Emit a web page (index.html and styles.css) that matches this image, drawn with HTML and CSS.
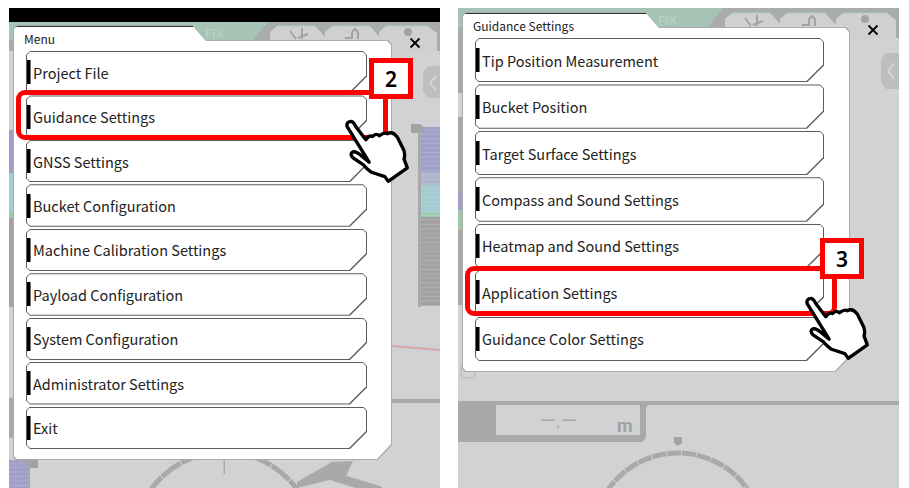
FILE: index.html
```html
<!DOCTYPE html>
<html lang="en">
<head>
    <meta charset="UTF-8">
    <meta name="viewport" content="width=device-width, initial-scale=1.0">
    <title>Menu steps</title>
    <link rel="stylesheet" href="styles.css">
</head>
<body>
    <svg class="defs" width="0" height="0">
        <defs>
            <symbol id="hand" viewBox="40 200 200 200">
                <path d="M52 228 Q50 213 65 213 Q72 215 78 228 L108 268 Q118 253 128 258 Q140 247 148 256 Q165 245 172 250 Q188 240 202 260 L222 300 Q226 318 222 325 L232 352 L175 392 L165 378 L125 365 Q110 355 100 342 L70 322 Q58 310 70 304 Q80 302 100 320 L118 335 Z" fill="#fff" stroke="#000" stroke-width="10" stroke-linejoin="round"/>
            </symbol>
            <pattern id="stripes" width="4.5" height="4.5" patternUnits="userSpaceOnUse">
                <rect y="3.5" width="4.5" height="1" fill="#fff" opacity=".15"/>
            </pattern>
        </defs>
    </svg>

    <div class="screen screen-left">
        <svg class="backdrop" viewBox="9 8 431 480">
            <rect x="9" y="8" width="431" height="480" fill="#d1d2d4"/>
            <rect x="9" y="22" width="431" height="29" fill="#a9abad"/>
            <rect x="9" y="8" width="431" height="14" fill="#000"/>
            <polygon points="9,22 268,22 253,40 9,40" fill="#a6c4b6"/>
            <text x="205" y="38" class="fix-text">FIX</text>
            <polygon points="270,32 277,26 315,26 330,42 330,51 270,51" fill="#cfd0d2"/>
            <polygon points="325,32 332,26 370,26 384,42 384,51 325,51" fill="#cfd0d2"/>
            <polygon points="379,32 386,26 428,26 437,33 437,51 379,51" fill="#cfd0d2"/>
            <path d="M278 26H315M332 26H370M386 26H428" stroke="#a6d0c8"/>
            <path d="M290 31l6 8M302 28v11M298 38l10-4M345 38h7v-6M352 32l3-3 3 3M358 32v7" stroke="#a3a3a3" stroke-width="2" fill="none"/>
            <circle cx="408" cy="32" r="4" fill="#a3a3a3"/>
            <polygon points="428,66 440,66 440,98 428,98 423,92 423,72" fill="#bdbec0"/>
            <path d="M436 76l-6 7 6 7" stroke="#d8d9da" stroke-width="1.5" fill="none"/>

            <rect x="418" y="133" width="3" height="174" fill="#a9a9a9"/>
            <rect x="421" y="127" width="19" height="45" fill="#a09fc8"/>
            <rect x="421" y="172" width="19" height="13" fill="#aeb4cc"/>
            <rect x="421" y="185" width="19" height="28" fill="#a4cad2"/>
            <rect x="421" y="213" width="19" height="4" fill="#9cc9a6"/>
            <rect x="421" y="217" width="19" height="89" fill="#a2a2a2"/>
            <rect x="421" y="127" width="19" height="179" fill="url(#stripes)"/>
            <polygon points="411,124 420,124 425,128 420,133 411,133" fill="#a3a3a3"/>
            <path d="M392 346L440 350" stroke="#d4a6a8" stroke-width="2"/>
            <rect x="392" y="399" width="48" height="4" fill="#a9a9a9"/>

            <rect x="9" y="130" width="4" height="43" fill="#a09fc8"/>
            <rect x="9" y="173" width="4" height="40" fill="#a4cad2"/>
            <rect x="9" y="213" width="4" height="5" fill="#9cc9a6"/>
            <rect x="9" y="218" width="4" height="89" fill="#a2a2a2"/>
            <rect x="9" y="398" width="4" height="40" fill="#a9a9a9"/>
            <rect x="9" y="460" width="19" height="28" fill="#a09fc8"/>
            <rect x="9" y="460" width="19" height="28" fill="url(#stripes)"/>
            <rect x="28" y="460" width="2" height="28" fill="#a9a9a9"/>
            <polygon points="24,460 38,460 38,468 30,468" fill="#a3a3a3"/>

            <circle cx="224" cy="542" r="90" fill="none" stroke="#a9a9a9" stroke-width="5" pathLength="360" stroke-dasharray="14.5 .6"/>
            <rect x="223.5" y="460" width="1.5" height="14" fill="#a9a9a9"/>
            <polygon points="297,482 332,462 353,461 346,476 297,488" fill="#a9a9a9"/>
            <path d="M335 477L378 490" stroke="#a9a9a9" stroke-width="9" stroke-linecap="round"/>
        </svg>

        <div class="dialog dialog-left">
            <div class="dialog-inner">
                <div class="dialog-title">Menu</div>
                <div class="menu-list">
                    <div class="menu-btn"><div class="menu-btn-inner"><span class="menu-bar"></span>Project File</div></div>
                    <div class="menu-btn"><div class="menu-btn-inner"><span class="menu-bar"></span>Guidance Settings</div></div>
                    <div class="menu-btn"><div class="menu-btn-inner"><span class="menu-bar"></span>GNSS Settings</div></div>
                    <div class="menu-btn"><div class="menu-btn-inner"><span class="menu-bar"></span>Bucket Configuration</div></div>
                    <div class="menu-btn"><div class="menu-btn-inner"><span class="menu-bar"></span>Machine Calibration Settings</div></div>
                    <div class="menu-btn"><div class="menu-btn-inner"><span class="menu-bar"></span>Payload Configuration</div></div>
                    <div class="menu-btn"><div class="menu-btn-inner"><span class="menu-bar"></span>System Configuration</div></div>
                    <div class="menu-btn"><div class="menu-btn-inner"><span class="menu-bar"></span>Administrator Settings</div></div>
                    <div class="menu-btn"><div class="menu-btn-inner"><span class="menu-bar"></span>Exit</div></div>
                </div>
            </div>
        </div>
        <svg class="close close-left" viewBox="0 0 12 12"><path d="M1.5 1.5L10.5 10.5M10.5 1.5L1.5 10.5" stroke="#000" stroke-width="1.8"/></svg>
        <div class="highlight highlight-left"></div>
        <div class="callout callout-left">2</div>
        <svg class="hand hand-left"><use href="#hand"/></svg>
    </div>

    <div class="screen screen-right">
        <svg class="backdrop" viewBox="458 8 441 480">
            <rect x="458" y="8" width="441" height="480" fill="#d1d2d4"/>
            <rect x="458" y="8" width="441" height="30" fill="#a9abad"/>
            <polygon points="458,8 723,8 708,27 458,27" fill="#a6c4b6"/>
            <text x="658" y="25" class="fix-text">FIX</text>
            <polygon points="725,19 732,13 770,13 785,29 785,38 725,38" fill="#cfd0d2"/>
            <polygon points="780,19 787,13 825,13 840,29 840,38 780,38" fill="#cfd0d2"/>
            <polygon points="836,19 843,13 887,13 896,20 896,38 836,38" fill="#cfd0d2"/>
            <path d="M732 13H770M787 13H825M843 13H887" stroke="#a6d0c8"/>
            <path d="M745 18l6 8M757 15v11M753 25l10-4M802 25h7v-6M809 19l3-3 3 3M815 19v7" stroke="#a3a3a3" stroke-width="2" fill="none"/>
            <circle cx="865" cy="19" r="4" fill="#a3a3a3"/>
            <polygon points="886,53 899,53 899,89 886,89 881,83 881,59" fill="#bdbec0"/>
            <path d="M894 63l-6 8 6 8" stroke="#d8d9da" stroke-width="1.5" fill="none"/>

            <rect x="458" y="38" width="4" height="55" fill="#a9a9a9"/>
            <rect x="458" y="117" width="4" height="76" fill="#a9a9a9"/>
            <rect x="458" y="193" width="4" height="17" fill="#a09fc8"/>
            <rect x="458" y="210" width="4" height="20" fill="#9cc9a6"/>
            <rect x="458" y="230" width="4" height="75" fill="#a9a9a9"/>
            <rect x="461" y="365" width="14" height="13" rx="3" fill="#d1d2d4" stroke="#b5b5b5"/>

            <rect x="458" y="401" width="441" height="4" fill="#a9a9a9"/>
            <polygon points="458,405 648,405 646,408 646,438 642,442 458,442" fill="#a9a9a9"/>
            <rect x="496" y="405" width="144" height="30" fill="#d1d2d4"/>
            <text x="540" y="428" class="readout">—.—</text>
            <text x="617" y="432" class="readout-unit">m</text>

            <polygon points="674,437 682,437 682,443 678,446 674,443" fill="#a3a3a3"/>
            <circle cx="678" cy="538" r="85" fill="none" stroke="#a9a9a9" stroke-width="5" pathLength="360" stroke-dasharray="9.5 .6"/>
        </svg>

        <div class="dialog dialog-right">
            <div class="dialog-inner">
                <div class="dialog-title">Guidance Settings</div>
                <div class="menu-list">
                    <div class="menu-btn"><div class="menu-btn-inner"><span class="menu-bar"></span>Tip Position Measurement</div></div>
                    <div class="menu-btn"><div class="menu-btn-inner"><span class="menu-bar"></span>Bucket Position</div></div>
                    <div class="menu-btn"><div class="menu-btn-inner"><span class="menu-bar"></span>Target Surface Settings</div></div>
                    <div class="menu-btn"><div class="menu-btn-inner"><span class="menu-bar"></span>Compass and Sound Settings</div></div>
                    <div class="menu-btn"><div class="menu-btn-inner"><span class="menu-bar"></span>Heatmap and Sound Settings</div></div>
                    <div class="menu-btn"><div class="menu-btn-inner"><span class="menu-bar"></span>Application Settings</div></div>
                    <div class="menu-btn"><div class="menu-btn-inner"><span class="menu-bar"></span>Guidance Color Settings</div></div>
                </div>
            </div>
        </div>
        <svg class="close close-right" viewBox="0 0 12 12"><path d="M1.5 1.5L10.5 10.5M10.5 1.5L1.5 10.5" stroke="#000" stroke-width="1.8"/></svg>
        <div class="highlight highlight-right"></div>
        <div class="callout callout-right">3</div>
        <svg class="hand hand-right"><use href="#hand"/></svg>
    </div>
</body>
</html>
```

FILE: styles.css
```css
body {
    margin: 0;
    width: 909px;
    height: 488px;
    overflow: hidden;
    display: flex;
    gap: 18px;
    padding: 8px 0 0 9px;
    box-sizing: border-box;
    background: #fff;
    font-family: "Noto Sans CJK JP", "Noto Sans", sans-serif;
    color: #222;
}
.defs {
    position: absolute;
}
.screen {
    position: relative;
    height: 480px;
    flex: none;
}
.screen-left {
    width: 431px;
}
.screen-right {
    width: 441px;
}
.backdrop {
    position: absolute;
    inset: 0;
    width: 100%;
    height: 100%;
    display: block;
}
.fix-text {
    font: 700 12px "Liberation Sans", sans-serif;
    fill: #b6d0c4;
}
.readout {
    font: 400 20px "Roboto", sans-serif;
    fill: #a9a9a9;
}
.readout-unit {
    font: 700 18px "Roboto", sans-serif;
    fill: #a0a0a0;
}

/* dialog: outer box is the border, inner box the white face */
.dialog {
    position: absolute;
    padding: 1px;
    box-sizing: border-box;
    background: #a9abad;
}
.dialog-left {
    left: 4px;
    top: 17px;
    width: 379px;
    height: 435px;
    clip-path: polygon(3px 0, 179px 0, 192px 15px, calc(100% - 4px) 15px, 100% 19px, 100% calc(100% - 15px), calc(100% - 14px) 100%, 3px 100%, 0 calc(100% - 3px), 0 3px);
}
.dialog-right {
    left: 4px;
    top: 4px;
    width: 388px;
    height: 360px;
    clip-path: polygon(3px 0, 183px 0, 196px 15px, calc(100% - 4px) 15px, 100% 19px, 100% calc(100% - 15px), calc(100% - 14px) 100%, 3px 100%, 0 calc(100% - 3px), 0 3px);
}
.dialog-inner {
    height: 100%;
    box-sizing: border-box;
    display: flex;
    flex-direction: column;
    background: #fff;
    border-top: 1px solid #333;
}
.dialog-left .dialog-inner {
    padding: 0 24px 10px 12px;
    clip-path: polygon(3px 0, 179px 0, 192px 15px, calc(100% - 4px) 15px, 100% 19px, 100% calc(100% - 15px), calc(100% - 14px) 100%, 3px 100%, 0 calc(100% - 3px), 0 3px);
}
.dialog-right .dialog-inner {
    padding: 0 25px 10px 12px;
    clip-path: polygon(3px 0, 183px 0, 196px 15px, calc(100% - 4px) 15px, 100% 19px, 100% calc(100% - 15px), calc(100% - 14px) 100%, 3px 100%, 0 calc(100% - 3px), 0 3px);
}
.dialog-title {
    height: 24px;
    flex: none;
    font-size: 12px;
    line-height: 24px;
    margin-left: -2px;
}

.menu-list {
    flex: 1;
    display: flex;
    flex-direction: column;
    gap: 2px;
}
.menu-btn {
    flex: 1;
    padding: 1px;
    box-sizing: border-box;
    background: #5c5c5c;
    clip-path: polygon(4px 0, calc(100% - 4px) 0, 100% 4px, 100% calc(100% - 17px), calc(100% - 17px) 100%, 4px 100%, 0 calc(100% - 4px), 0 4px);
}
.menu-btn-inner {
    height: 100%;
    display: flex;
    align-items: center;
    gap: 2px;
    background: #fff;
    font-size: 14.5px;
    clip-path: polygon(3px 0, calc(100% - 3px) 0, 100% 3px, 100% calc(100% - 17px), calc(100% - 17px) 100%, 3px 100%, 0 calc(100% - 3px), 0 3px);
}
.menu-bar {
    width: 3px;
    height: 24px;
    flex: none;
    background: #000;
    border-right: 1px solid #777;
}

/* annotations over the screen */
.close {
    position: absolute;
    width: 12px;
    height: 12px;
}
.close-left {
    left: 400px;
    top: 29px;
}
.close-right {
    left: 409px;
    top: 16px;
}
.highlight {
    position: absolute;
    width: 372px;
    height: 50px;
    box-sizing: border-box;
    border: 5.5px solid #f00;
    border-radius: 9px;
}
.highlight-left {
    left: 7px;
    top: 82px;
}
.highlight-right {
    left: 7px;
    top: 258px;
}
.callout {
    position: absolute;
    width: 44px;
    height: 41px;
    box-sizing: border-box;
    border: 5px solid #f00;
    background: #fff;
    color: #000;
    display: flex;
    align-items: center;
    justify-content: center;
    font-family: "Noto Sans", sans-serif;
    font-size: 21px;
    font-weight: 600;
}
.callout-left {
    left: 360px;
    top: 50px;
}
.callout-right {
    left: 362px;
    top: 230px;
}
.hand {
    position: absolute;
    width: 67px;
    height: 67px;
    overflow: visible;
}
.hand-left {
    left: 334px;
    top: 109px;
}
.hand-right {
    left: 345px;
    top: 286px;
}
```
